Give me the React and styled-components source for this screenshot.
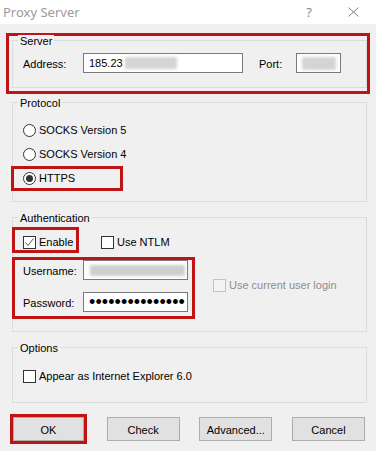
import React from "react";
import styled, { createGlobalStyle } from "styled-components";

const GlobalStyle = createGlobalStyle`
  html, body { margin: 0; padding: 0; background: #f0f0f0; }
  body {
    font-family: "Liberation Sans", Arial, sans-serif;
    font-size: 11px;
    color: #000;
  }
  * { box-sizing: border-box; }
`;

const Window = styled.div`
  width: 376px;
  height: 451px;
  background: #f0f0f0;
  overflow: hidden;
  display: flex;
  flex-direction: column;
`;

const TitleBar = styled.div`
  height: 24px;
  flex: none;
  background: #fff;
  display: flex;
  align-items: center;
  padding-left: 3px;
`;

const Title = styled.span`
  flex: 1;
  font-family: "Noto Sans", "Open Sans", sans-serif;
  font-size: 13px;
  color: #9a9a9a;
`;

const HelpGlyph = styled.span`
  font-family: "Noto Sans", sans-serif;
  font-size: 13px;
  color: #8a8a8a;
  margin-right: 36px;
`;

const CloseIcon = styled.svg`
  width: 11px;
  height: 10px;
  margin-right: 17px;
`;

const Body = styled.div`
  display: flex;
  flex-direction: column;
  padding: 9px 9px 0 12px;
`;

const Highlight = styled.div`
  border: 3px solid #c01414;
  margin: ${(p) => p.$margin || "0"};
  padding: ${(p) => p.$padding || "0"};
  width: ${(p) => (p.$width ? `${p.$width}px` : "auto")};
  height: ${(p) => (p.$height ? `${p.$height}px` : "auto")};
  display: ${(p) => p.$display || "block"};
  flex-direction: ${(p) => p.$direction || "row"};
  align-items: ${(p) => p.$align || "stretch"};
  flex: none;
`;

const GroupBox = styled.div`
  position: relative;
  border: 1px solid #dcdcdc;
  margin-top: ${(p) => p.$mt || 0}px;
  padding: ${(p) => p.$padding};
  display: flex;
  flex-direction: column;
`;

const Legend = styled.span`
  position: absolute;
  top: -6px;
  left: 5px;
  padding: 0 2px;
  line-height: 13px;
  background: #f0f0f0;
`;

const FieldRow = styled.div`
  display: flex;
  align-items: center;
  height: 20px;
  margin-top: ${(p) => p.$mt || 0}px;
`;

const Label = styled.span`
  width: ${(p) => p.$width}px;
  flex: none;
  padding-top: 1px;
`;

const TextBox = styled.div`
  width: ${(p) => p.$width}px;
  height: 20px;
  margin-right: ${(p) => p.$mr || 0}px;
  flex: none;
  border: 1px solid #7a7a7a;
  background: #fff;
  display: flex;
  align-items: center;
  padding-left: ${(p) => p.$pl || 5}px;
  overflow: hidden;
  white-space: nowrap;
`;

const Blurred = styled.span`
  display: inline-block;
  width: ${(p) => p.$width}px;
  height: ${(p) => p.$height || 12}px;
  margin-left: ${(p) => p.$ml || 0}px;
  background: ${(p) => p.$color || "#d4d4d4"};
  filter: blur(1.5px);
  flex: none;
`;

const Dots = styled.span`
  font-size: 18px;
  line-height: 1;
  letter-spacing: 0.1px;
  margin-top: -1px;
`;

const RadioRow = styled.div`
  display: flex;
  align-items: center;
  gap: 3px;
  height: 16px;
  margin-top: ${(p) => p.$mt || 0}px;
`;

const RadioCircle = styled.span`
  width: 13px;
  height: 13px;
  flex: none;
  border: 1px solid #333;
  border-radius: 50%;
  background: #fff;
  display: flex;
  align-items: center;
  justify-content: center;
  &::after {
    content: "";
    display: ${(p) => (p.$checked ? "block" : "none")};
    width: 7px;
    height: 7px;
    border-radius: 50%;
    background: #333;
  }
`;

const CheckRow = styled.div`
  display: flex;
  align-items: center;
  gap: 3px;
  height: 16px;
  flex: none;
  margin: ${(p) => p.$margin || "0"};
  color: ${(p) => (p.$disabled ? "#8d8d8d" : "#000")};
`;

const CheckBox = styled.span`
  width: 13px;
  height: 13px;
  flex: none;
  border: 1px solid ${(p) => (p.$disabled ? "#c2c2c2" : "#333")};
  background: ${(p) => (p.$disabled ? "#f4f4f4" : "#fff")};
  display: flex;
  align-items: center;
  justify-content: center;
`;

const AuthTop = styled.div`
  display: flex;
  align-items: flex-start;
`;

const AuthBottom = styled.div`
  display: flex;
  align-items: flex-start;
  margin-top: 4px;
`;

const ButtonRow = styled.div`
  display: flex;
  align-items: center;
  justify-content: space-between;
  margin: 11px 2px 0 -2px;
`;

const Button = styled.div`
  width: ${(p) => p.$width || 73}px;
  height: 24px;
  flex: none;
  background: #e1e1e1;
  border: 1px solid #adadad;
  display: flex;
  align-items: center;
  justify-content: center;
  padding-top: 2px;
`;

function Radio({ checked, children }) {
  return (
    <>
      <RadioCircle $checked={checked} />
      <span>{children}</span>
    </>
  );
}

function Check({ checked, disabled, children, margin }) {
  return (
    <CheckRow $disabled={disabled} $margin={margin}>
      <CheckBox $disabled={disabled}>
        {checked && (
          <svg width="11" height="11" viewBox="0 0 11 11">
            <polyline
              points="1.5,5.5 4,8.5 9.5,1.5"
              fill="none"
              stroke="#555"
              strokeWidth="1"
            />
          </svg>
        )}
      </CheckBox>
      <span>{children}</span>
    </CheckRow>
  );
}

export default function App() {
  return (
    <>
      <GlobalStyle />
      <Window>
        <TitleBar>
          <Title>Proxy Server</Title>
          <HelpGlyph>?</HelpGlyph>
          <CloseIcon viewBox="0 0 11 10">
            <path d="M0.5 0.5 L10.5 9.5 M10.5 0.5 L0.5 9.5" stroke="#8a8a8a" strokeWidth="1" fill="none" />
          </CloseIcon>
        </TitleBar>
        <Body>
          <Highlight $margin="0 -3px 0 -6px" $padding="4px 0 3px 3px">
            <GroupBox $padding="12px 0 14px 10px">
              <Legend>Server</Legend>
              <FieldRow>
                <Label $width={60}>Address:</Label>
                <TextBox $width={160} $mr={16}>
                  185.23
                  <Blurred $width={52} $ml={2} />
                </TextBox>
                <Label $width={37}>Port:</Label>
                <TextBox $width={45}>
                  <Blurred $width={34} $height={13} />
                </TextBox>
              </FieldRow>
            </GroupBox>
          </Highlight>

          <GroupBox $mt={8} $padding="19px 0 10px 10px">
            <Legend>Protocol</Legend>
            <RadioRow>
              <Radio>SOCKS Version 5</Radio>
            </RadioRow>
            <RadioRow $mt={8}>
              <Radio>SOCKS Version 4</Radio>
            </RadioRow>
            <Highlight $margin="4px 0 0 -12px" $padding="1px 0 2px 9px" $width={112}>
              <RadioRow>
                <Radio checked>HTTPS</Radio>
              </RadioRow>
            </Highlight>
          </GroupBox>

          <GroupBox $mt={15} $padding="9px 0 12px 10px">
            <Legend>Authentication</Legend>
            <AuthTop>
              <Highlight
                $margin="0 0 0 -11px"
                $padding="4px 0 0 8px"
                $width={67}
                $height={26}
                $display="flex"
                $align="center"
              >
                <Check checked>Enable</Check>
              </Highlight>
              <Check margin="7px 0 0 22px">Use NTLM</Check>
            </AuthTop>
            <AuthBottom>
              <Highlight
                $margin="0 0 0 -11px"
                $padding="0 4px 4px 8px"
                $width={183}
                $display="flex"
                $direction="column"
              >
                <FieldRow>
                  <Label $width={60}>Username:</Label>
                  <TextBox $width={105} $pl={6}>
                    <Blurred $width={95} $height={11} $color="#cfcfcf" />
                  </TextBox>
                </FieldRow>
                <FieldRow $mt={12}>
                  <Label $width={60}>Password:</Label>
                  <TextBox $width={105} $pl={5}>
                    <Dots>•••••••••••••••</Dots>
                  </TextBox>
                </FieldRow>
              </Highlight>
              <Check disabled margin="20px 0 0 18px">Use current user login</Check>
            </AuthBottom>
          </GroupBox>

          <GroupBox $mt={15} $padding="20px 0 18px 10px">
            <Legend>Options</Legend>
            <Check>Appear as Internet Explorer 6.0</Check>
          </GroupBox>

          <ButtonRow>
            <Highlight $width={77} $height={30}>
              <Button $width={71}>OK</Button>
            </Highlight>
            <Button>Check</Button>
            <Button>Advanced...</Button>
            <Button>Cancel</Button>
          </ButtonRow>
        </Body>
      </Window>
    </>
  );
}
